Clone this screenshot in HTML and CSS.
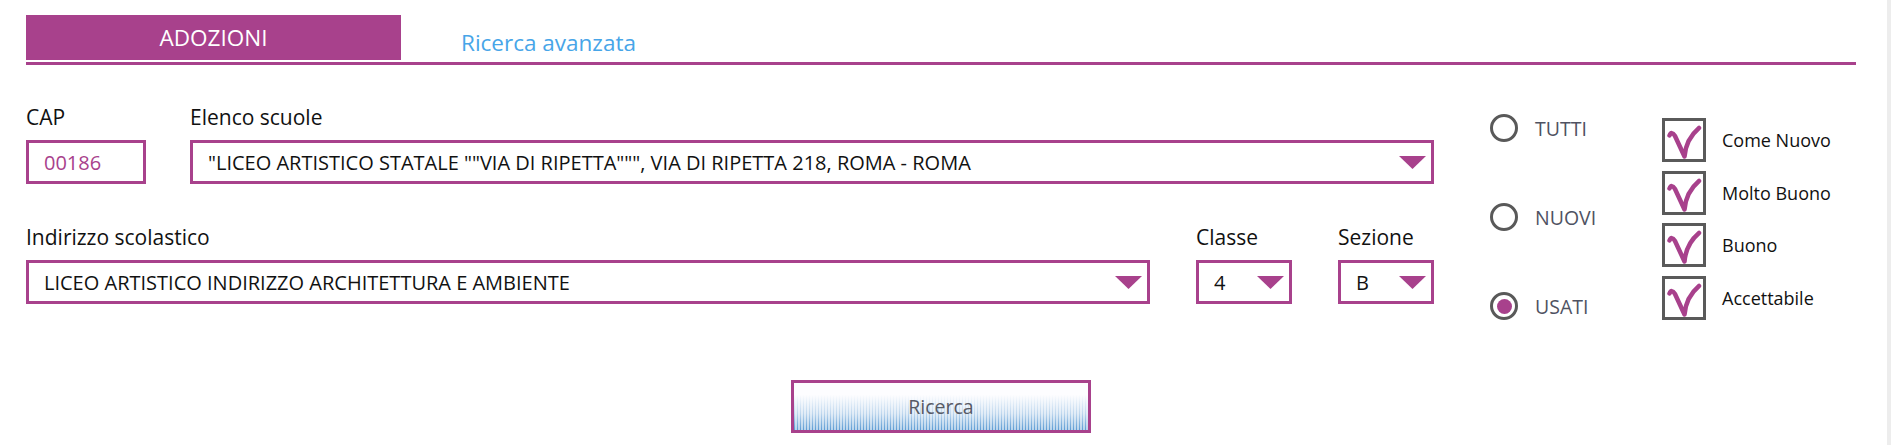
FILE: index.html
```html
<!DOCTYPE html>
<html lang="it">
<head>
<meta charset="utf-8">
<title>Adozioni</title>
<link rel="stylesheet" href="styles.css">
</head>
<body>
<div class="page">
  <div class="tabs">
    <div class="tab tab-active">ADOZIONI</div>
    <a class="tab-link">Ricerca avanzata</a>
  </div>
  <div class="rule"></div>

  <div class="form">
    <div class="fields">
      <div class="row row-1">
        <div class="field field-cap">
          <div class="label">CAP</div>
          <div class="box box-input"><span class="cap-value">00186</span></div>
        </div>
        <div class="field field-grow">
          <div class="label">Elenco scuole</div>
          <div class="box box-select">
            <span class="value">"LICEO ARTISTICO STATALE ""VIA DI RIPETTA""", VIA DI RIPETTA 218, ROMA - ROMA</span>
            <svg class="caret" width="27" height="13" viewBox="0 0 27 13"><polygon points="0,0 27,0 13.5,13" /></svg>
          </div>
        </div>
      </div>
      <div class="row row-2">
        <div class="field field-grow">
          <div class="label">Indirizzo scolastico</div>
          <div class="box box-select">
            <span class="value">LICEO ARTISTICO INDIRIZZO ARCHITETTURA E AMBIENTE</span>
            <svg class="caret" width="27" height="13" viewBox="0 0 27 13"><polygon points="0,0 27,0 13.5,13" /></svg>
          </div>
        </div>
        <div class="field field-small">
          <div class="label">Classe</div>
          <div class="box box-select">
            <span class="value">4</span>
            <svg class="caret" width="27" height="13" viewBox="0 0 27 13"><polygon points="0,0 27,0 13.5,13" /></svg>
          </div>
        </div>
        <div class="field field-small">
          <div class="label">Sezione</div>
          <div class="box box-select">
            <span class="value">B</span>
            <svg class="caret" width="27" height="13" viewBox="0 0 27 13"><polygon points="0,0 27,0 13.5,13" /></svg>
          </div>
        </div>
      </div>
    </div>

    <div class="radios">
      <div class="radio"><span class="radio-dot"></span><span class="radio-label">TUTTI</span></div>
      <div class="radio"><span class="radio-dot"></span><span class="radio-label">NUOVI</span></div>
      <div class="radio"><span class="radio-dot radio-on"></span><span class="radio-label">USATI</span></div>
    </div>

    <div class="checks">
      <div class="check">
        <span class="check-box"><svg width="38" height="38" viewBox="3 3 38 38"><path d="M7.5 17.5 Q9.5 12.5 13 18 L22.5 38.5 Q24 21 37 10" /></svg></span>
        <span class="check-label">Come Nuovo</span>
      </div>
      <div class="check">
        <span class="check-box"><svg width="38" height="38" viewBox="3 3 38 38"><path d="M7.5 17.5 Q9.5 12.5 13 18 L22.5 38.5 Q24 21 37 10" /></svg></span>
        <span class="check-label">Molto Buono</span>
      </div>
      <div class="check">
        <span class="check-box"><svg width="38" height="38" viewBox="3 3 38 38"><path d="M7.5 17.5 Q9.5 12.5 13 18 L22.5 38.5 Q24 21 37 10" /></svg></span>
        <span class="check-label">Buono</span>
      </div>
      <div class="check">
        <span class="check-box"><svg width="38" height="38" viewBox="3 3 38 38"><path d="M7.5 17.5 Q9.5 12.5 13 18 L22.5 38.5 Q24 21 37 10" /></svg></span>
        <span class="check-label">Accettabile</span>
      </div>
    </div>
  </div>

  <div class="actions">
    <button class="search-btn" type="button">Ricerca</button>
  </div>
</div>
</body>
</html>
```

FILE: styles.css
```css
html {
  background: linear-gradient(to left, #ededed 4px, #ffffff 4px);
  min-height: 100%;
}

body {
  margin: 0;
  font-family: "Open Sans", "Noto Sans", sans-serif;
  color: #111111;
}

.page {
  padding: 15px 35px 0 26px;
}

/* Tabs */
.tabs {
  display: flex;
  height: 45px;
}

.tab {
  box-sizing: border-box;
}

.tab-active {
  width: 375px;
  background: #a8418c;
  color: #ffffff;
  font-size: 22.5px;
  line-height: 45px;
  text-align: center;
}

.tab-link {
  margin-left: 60px;
  padding-top: 5px;
  font-size: 22.5px;
  line-height: 45px;
  color: #47a5e8;
  cursor: pointer;
}

.rule {
  height: 3px;
  margin-top: 2px;
  background: #a8418c;
}

/* Form */
.form {
  display: flex;
  align-items: flex-start;
  margin-top: 42px;
}

.fields {
  width: 1408px;
  flex: none;
}

.row {
  display: flex;
}

.row-1 {
  gap: 44px;
}

.row-2 {
  gap: 46px;
  margin-top: 43px;
}

.field-cap {
  width: 120px;
  flex: none;
}

.field-grow {
  flex: 1;
  min-width: 0;
}

.field-small {
  width: 96px;
  flex: none;
}

.label {
  font-size: 21px;
  line-height: 21px;
  height: 21px;
  margin-bottom: 12px;
  color: #111111;
  white-space: nowrap;
}

.box {
  box-sizing: border-box;
  height: 44px;
  border: 3px solid #a8418c;
  background: #ffffff;
  display: flex;
  align-items: center;
  padding: 0 5px 0 15px;
  font-size: 20px;
}

.cap-value {
  color: #a8418c;
}

.box-select .value {
  flex: 1;
  white-space: nowrap;
  overflow: hidden;
  color: #111111;
}

.caret {
  flex: none;
  display: block;
  fill: #a8418c;
}

/* Radios */
.radios {
  margin-left: 56px;
  margin-top: 7px;
  width: 172px;
  flex: none;
  display: flex;
  flex-direction: column;
  gap: 61px;
}

.radio {
  display: flex;
  align-items: center;
  height: 28px;
  gap: 17px;
}

.radio-dot {
  box-sizing: border-box;
  width: 28px;
  height: 28px;
  border: 3px solid #595959;
  border-radius: 50%;
  display: flex;
  align-items: center;
  justify-content: center;
  flex: none;
}

.radio-on::after {
  content: "";
  width: 15px;
  height: 15px;
  border-radius: 50%;
  background: #a8418c;
}

.radio-label {
  font-size: 19.5px;
  color: #4f5262;
}

/* Checkboxes */
.checks {
  margin-top: 11px;
  display: flex;
  flex-direction: column;
  gap: 8.5px;
}

.check {
  display: flex;
  align-items: center;
  gap: 16px;
}

.check-box {
  box-sizing: border-box;
  width: 44px;
  height: 44px;
  border: 3px solid #5a5a5a;
  flex: none;
  background: #ffffff;
}

.check-box svg {
  display: block;
  fill: none;
  stroke: #a8418c;
  stroke-width: 4.5;
  stroke-linecap: round;
  stroke-linejoin: round;
}

.check-label {
  font-size: 18px;
  color: #111111;
}

/* Button */
.actions {
  display: flex;
  justify-content: center;
  margin-top: 60px;
}

.search-btn {
  box-sizing: border-box;
  width: 300px;
  height: 53px;
  border: 3px solid #a8418c;
  font-family: "Open Sans", "Noto Sans", sans-serif;
  font-size: 19.5px;
  color: #575a66;
  padding: 0;
  background:
    linear-gradient(to bottom, #fdfdff 0%, rgba(253, 253, 255, 1) 25%, rgba(253, 253, 255, 0.6) 65%, rgba(253, 253, 255, 0) 100%),
    repeating-linear-gradient(to right, #5d9cd4 0 1px, #b9d4ec 1px 3px);
}
```
